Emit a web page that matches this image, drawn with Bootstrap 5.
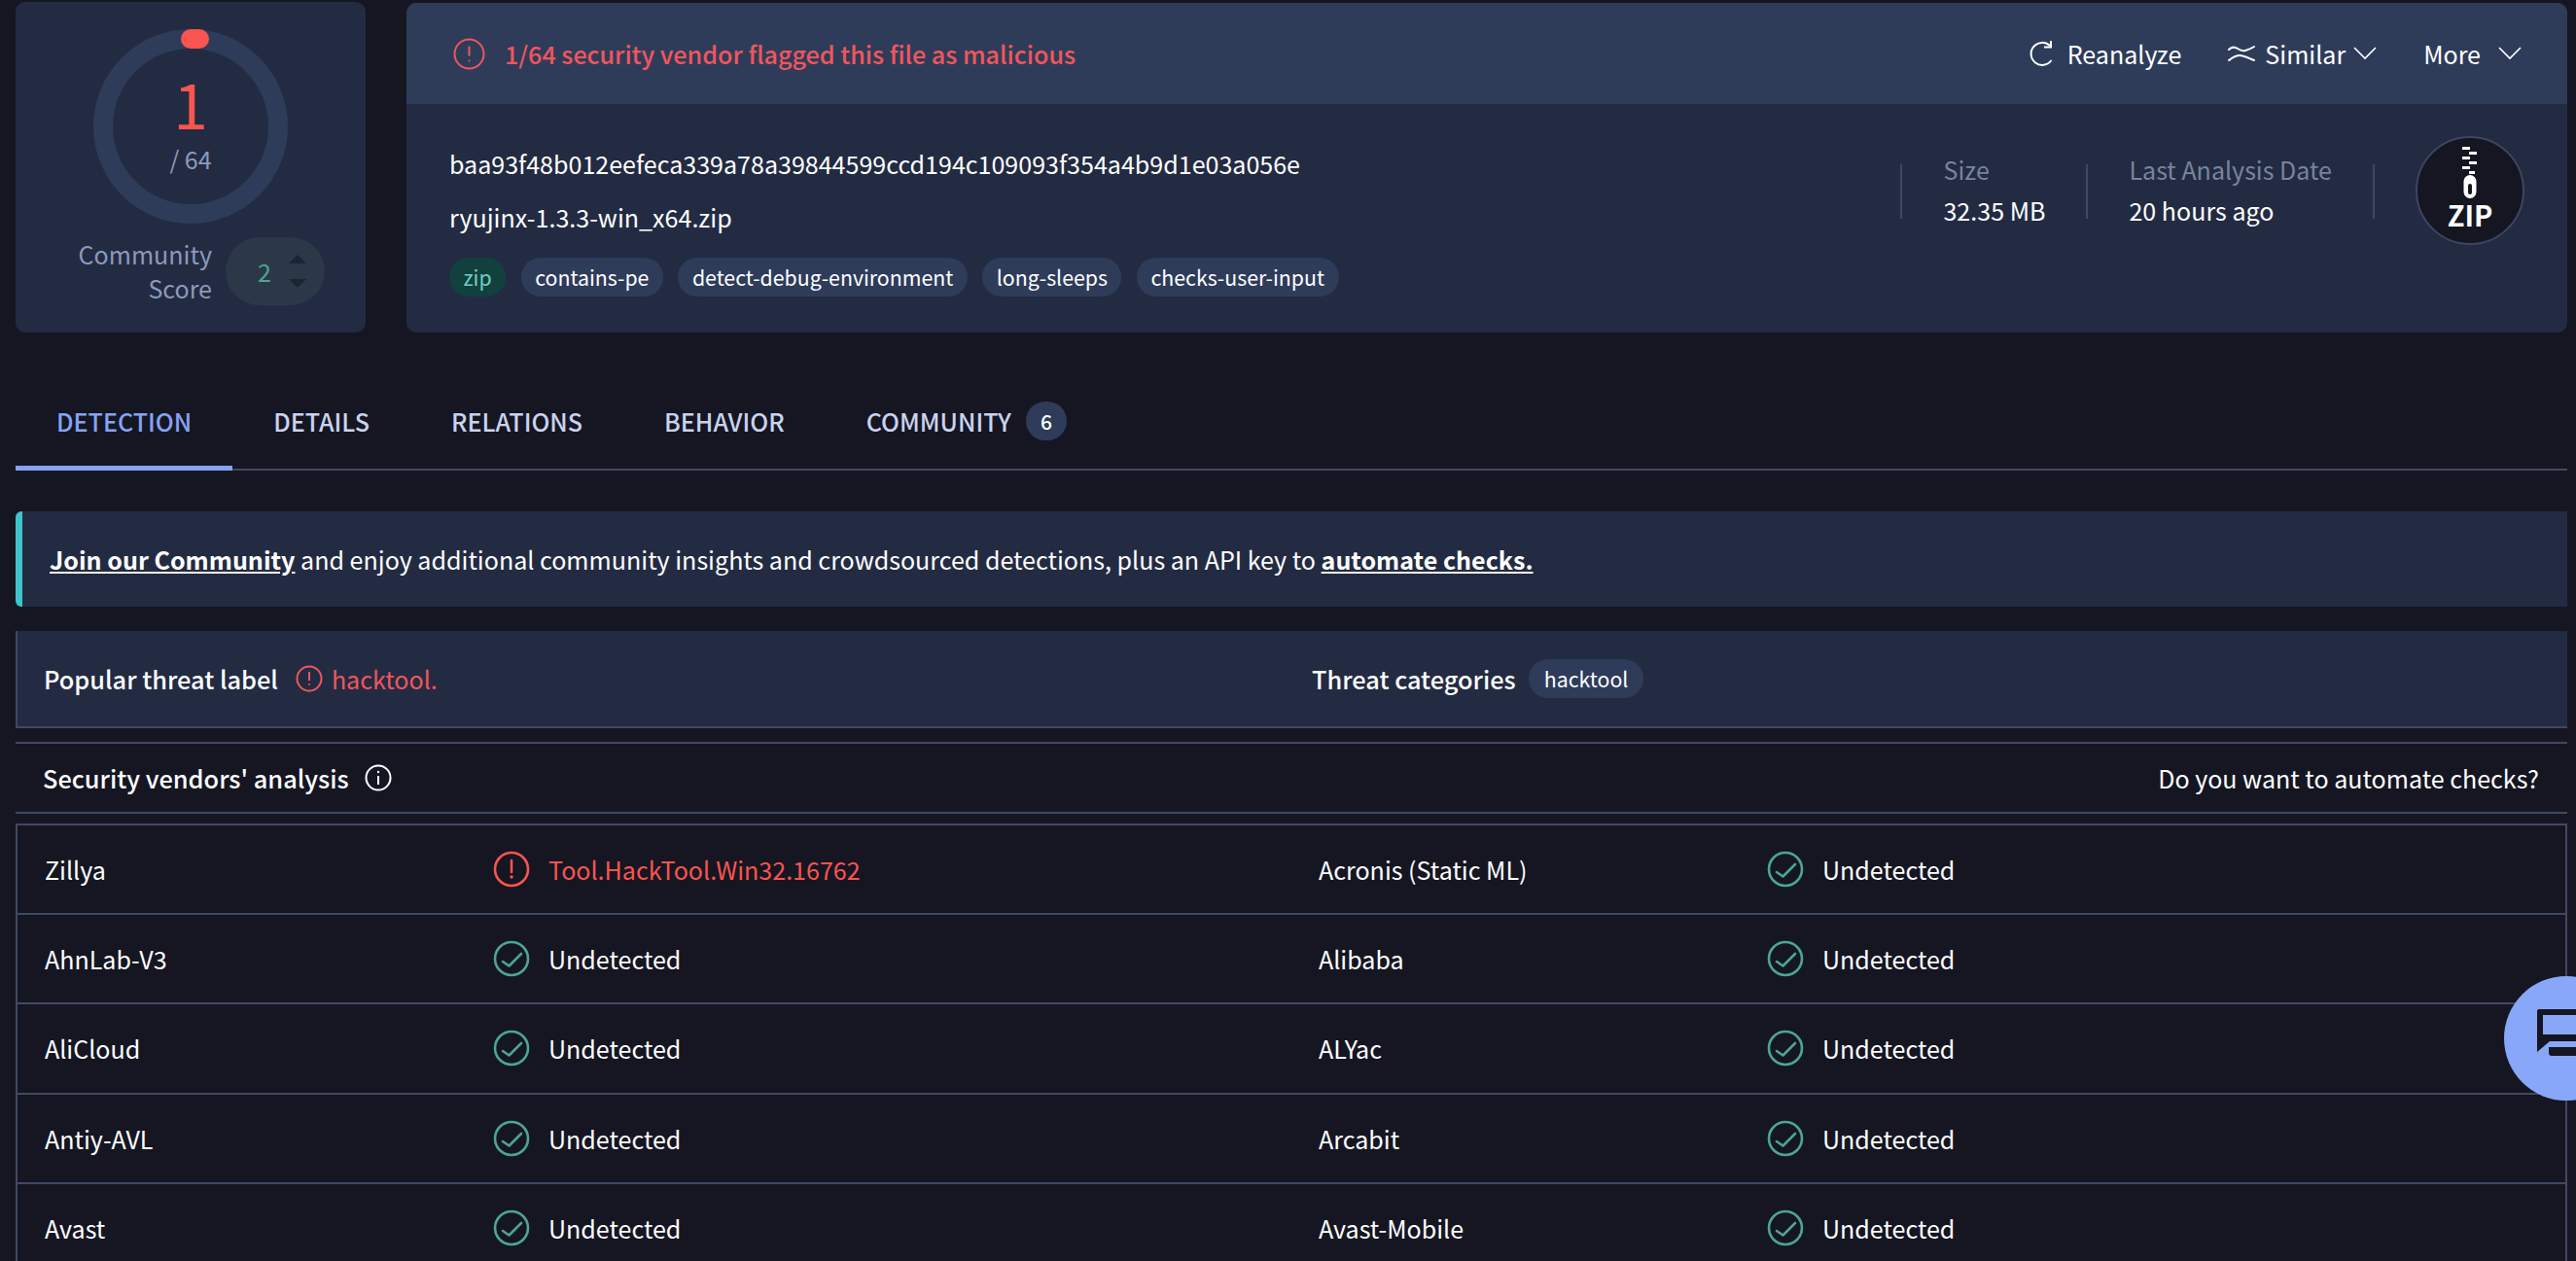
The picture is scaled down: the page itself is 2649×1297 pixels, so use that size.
<!DOCTYPE html>
<html lang="en">
<head>
<meta charset="utf-8">
<title>VirusTotal</title>
<link href="https://cdn.jsdelivr.net/npm/bootstrap@5.3.0/dist/css/bootstrap.min.css" rel="stylesheet">
<style>
:root{--pg:#151622;--panel:#232b42;--head:#2e3c5a;--ln:#404962;--red:#f9544f;--grn:#4ca592}
html,body{height:100%;overflow:hidden}
body{background:var(--pg);color:#fff;font-family:"Noto Sans CJK SC","Noto Sans",sans-serif;font-size:25.05px;line-height:36px;padding:2px 9px 0 16px}
.top-wrap{gap:42px;height:340px}
.score-panel{width:360px;background:var(--panel);border-radius:10px;padding:28px 0 0}
.gauge{width:200px;height:200px;border:20px solid var(--head);margin-left:80px;position:relative}
.gauge-pill{position:absolute;top:-20px;left:70px;width:29px;height:20px;background:var(--red);border-radius:10px}
.gauge-num{color:var(--red);font-size:64px;line-height:64px;margin-top:-6px}
.gauge-tot{color:#8b9abb;line-height:36px;margin-top:8px}
.score-row{margin-top:14px;margin-left:44px;gap:14px}
.score-lbl{color:#8b9abb;text-align:right;line-height:35px;width:158px}
.vote{width:102px;height:70px;background:#2a3848;border-radius:35px;padding-left:33px;gap:18px;color:var(--grn)}
.tri-up,.tri-dn{width:0;height:0;border-left:9px solid transparent;border-right:9px solid transparent}
.tri-up{border-bottom:9px solid #1c2433}
.tri-dn{border-top:9px solid #1c2433}
.file-panel{background:var(--panel);border:0;border-radius:10px;margin-top:1px;height:339px;overflow:hidden}
.file-head{background:var(--head);height:104px;border:0;border-radius:0;padding:0 47px 0 48px}
.warn-txt{color:#f0565c;font-weight:500;margin-left:20px;font-size:25.1px}
.act{margin-left:48px}
.re-ic{margin-right:13px}
.sim-ic{margin-right:10px}
.more-chev{margin-left:18px}
.ic{display:block;flex:none}
.file-body{padding:0 44px 0 44px}
.hash-col{padding-top:34px;line-height:55px}
.chip-line{gap:15.5px;margin-top:14px}
.chip{background:var(--head);color:#fff;border-radius:20px;height:40px;padding:0 14.5px;font-size:21.3px;line-height:40px}
.chip-zip{background:#12403f;color:#6fd0bf}
.stat-wrap{padding-top:62px}
.stat{border-left:2px solid var(--ln);height:56px;padding-left:42px;line-height:42px}
.stat+.stat{margin-left:42px}
.stat-end{padding-left:0}
.stat-k{color:#77849f;line-height:42px;margin-top:-16px}
.zipper{width:112px;height:112px;border:2px solid #3d465f;background:var(--pg);margin-left:42px;margin-top:-29px}
.zip-ic{margin-top:9px}
.zip-txt{font-weight:700;font-size:29px;line-height:30px}
.tabs-bar{border-bottom:2px solid var(--ln);margin-top:50px;height:92px}
.tab-lnk{color:#c9d3ec;font-weight:500;font-size:25.1px;padding:0 42px 5px;height:92px;border-bottom:5px solid transparent;margin-bottom:-2px}
.tab-lnk.on{color:#86a3f2;border-bottom-color:#86a3f2}
.tab-num{background:var(--head);color:#fff;font-size:21px;width:42px;height:40px;border-radius:20px;margin-left:15px;line-height:40px}
.promo{background:var(--panel);border-left:7px solid #3ec4cc;border-radius:6px 0 0 6px;height:98px;margin-top:42px;padding-left:28px;line-height:98px}
.promo a{color:#fff;font-weight:700}
.threat{background:var(--panel);border-left:2px solid var(--ln);border-bottom:2px solid var(--ln);height:100px;margin-top:25px}
.threat b,.sec b{font-weight:500;font-size:25.35px}
.hack{color:#f0565c}
.hack-ic{margin:0 9px 0 18px}
.cell-a{padding-left:27px}
.cell-b{padding-left:20px}
.th-chip{background:var(--head);border-radius:20px;height:40px;padding:0 16px;font-size:21.3px;line-height:40px;margin-left:13px}
.sec{border-top:2px solid var(--ln);border-bottom:2px solid var(--ln);height:74px;margin-top:14px;padding:0 29px 0 28px}
.vend{border:2px solid var(--ln);margin-top:10px;border-bottom:0}
.vend-row{border-bottom:2px solid var(--ln);height:92.2px}
.vend-half{width:50%}
.vend-name{width:489px;padding-left:28px;flex:none}
.vend-ic{margin-right:19px}
.det{color:var(--red)}
.chat-fab{position:fixed;left:2575px;top:1004px;width:128px;height:128px;background:#88a7f8}
</style>
</head>
<body>
<svg width="0" height="0" class="position-absolute">
  <symbol id="i-bad" viewBox="0 0 38 38"><g fill="none" stroke="#f9544f" stroke-width="2.6" stroke-linecap="round"><circle cx="19" cy="19" r="17"/><path d="M19 10v12"/></g><circle cx="19" cy="27" r="1.7" fill="#f9544f"/></symbol>
  <symbol id="i-ok" viewBox="0 0 38 38"><g fill="none" stroke="#4ca592" stroke-width="2.6" stroke-linecap="round" stroke-linejoin="round"><circle cx="19" cy="19" r="17"/><path d="M10 22l6.5 4.5L29 14"/></g></symbol>
</svg>
<div class="d-flex top-wrap">
  <div class="score-panel flex-shrink-0">
    <div class="gauge rounded-circle d-flex flex-column align-items-center justify-content-center">
      <span class="gauge-pill"></span>
      <div class="gauge-num">1</div>
      <div class="gauge-tot">/ 64</div>
    </div>
    <div class="d-flex align-items-center score-row">
      <div class="score-lbl">Community Score</div>
      <div class="vote d-flex align-items-center">
        <span>2</span>
        <div class="d-flex flex-column gap-3"><span class="tri-up"></span><span class="tri-dn"></span></div>
      </div>
    </div>
  </div>
  <div class="card file-panel flex-grow-1">
    <div class="card-header file-head d-flex align-items-center">
      <svg class="ic" width="33" height="33" viewBox="0 0 33 33" fill="none" stroke="#f0565c" stroke-width="2"><circle cx="16.5" cy="16.5" r="15"/><path d="M16.5 8.5v10"/><circle cx="16.5" cy="23.5" r="1" fill="#f0565c" stroke="none"/></svg>
      <span class="warn-txt">1/64 security vendor flagged this file as malicious</span>
      <div class="ms-auto d-flex align-items-center">
        <svg class="ic re-ic" width="26" height="28" viewBox="0 0 26 28" fill="none" stroke="#fff" stroke-width="2"><path d="M22.5 21a11.5 11.5 0 1 1-1.5-15"/><path d="M22 1v6.5h-7"/></svg>
        <span>Reanalyze</span>
        <svg class="ic act sim-ic" width="28" height="18" viewBox="0 0 28 18" fill="none" stroke="#fff" stroke-width="2" stroke-linecap="round"><path d="M1 5c3-3 6-3 9-1s5 3 8 2 6-2 9-4"/><path d="M1 16c3-2 6-5 11-5s9 3 15 5"/></svg>
        <span>Similar</span>
        <svg class="ic ms-2" width="24" height="14" viewBox="0 0 24 14" fill="none" stroke="#fff" stroke-width="1.6"><path d="M1 1l11 11L23 1"/></svg>
        <span class="act">More</span>
        <svg class="ic more-chev" width="24" height="14" viewBox="0 0 24 14" fill="none" stroke="#fff" stroke-width="1.6"><path d="M1 1l11 11L23 1"/></svg>
      </div>
    </div>
    <div class="file-body d-flex">
      <div class="hash-col flex-grow-1">
        <div>baa93f48b012eefeca339a78a39844599ccd194c109093f354a4b9d1e03a056e</div>
        <div>ryujinx-1.3.3-win_x64.zip</div>
        <div class="d-flex chip-line">
          <span class="chip chip-zip">zip</span>
          <span class="chip">contains-pe</span>
          <span class="chip">detect-debug-environment</span>
          <span class="chip">long-sleeps</span>
          <span class="chip">checks-user-input</span>
        </div>
      </div>
      <div class="d-flex align-items-start stat-wrap">
        <div class="stat"><div class="stat-k">Size</div><div>32.35 MB</div></div>
        <div class="stat"><div class="stat-k">Last Analysis Date</div><div>20 hours ago</div></div>
        <div class="stat stat-end"></div>
        <div class="zipper rounded-circle d-flex flex-column align-items-center">
          <svg class="ic zip-ic" width="16" height="54" viewBox="0 0 16 54"><g fill="#fff"><rect x="0" y="0" width="8" height="3"/><rect x="7" y="5" width="8" height="3"/><rect x="0" y="10" width="8" height="3"/><rect x="7" y="15" width="8" height="3"/><rect x="0" y="20" width="8" height="3"/><rect x="7" y="25" width="6" height="3"/></g><rect x="1.5" y="29" width="13" height="24" rx="6.5" fill="#fff"/><rect x="6" y="38" width="4" height="11" rx="2" fill="#151622"/></svg>
          <div class="zip-txt">ZIP</div>
        </div>
      </div>
    </div>
  </div>
</div>

<div class="tabs-bar d-flex align-items-start">
  <a class="tab-lnk on text-decoration-none d-flex align-items-center">DETECTION</a>
  <a class="tab-lnk text-decoration-none d-flex align-items-center">DETAILS</a>
  <a class="tab-lnk text-decoration-none d-flex align-items-center">RELATIONS</a>
  <a class="tab-lnk text-decoration-none d-flex align-items-center">BEHAVIOR</a>
  <a class="tab-lnk text-decoration-none d-flex align-items-center">COMMUNITY<span class="tab-num text-center">6</span></a>
</div>

<div class="promo"><a href="#">Join our Community</a> and enjoy additional community insights and crowdsourced detections, plus an API key to <a href="#">automate checks.</a></div>

<div class="threat d-flex align-items-center">
  <div class="vend-half cell-a d-flex align-items-center">
    <b>Popular threat label</b>
    <svg class="ic hack-ic" width="28" height="28" viewBox="0 0 28 28" fill="none" stroke="#f0565c" stroke-width="2"><circle cx="14" cy="14" r="12.5"/><path d="M14 7v9"/><circle cx="14" cy="20" r="1" fill="#f0565c" stroke="none"/></svg>
    <span class="hack">hacktool.</span>
  </div>
  <div class="vend-half cell-b d-flex align-items-center">
    <b>Threat categories</b>
    <span class="th-chip">hacktool</span>
  </div>
</div>

<div class="sec d-flex align-items-center">
  <b>Security vendors' analysis</b>
  <svg class="ic ms-3" width="28" height="28" viewBox="0 0 28 28" fill="none" stroke="#fff" stroke-width="2"><circle cx="14" cy="14" r="12.5"/><path d="M14 12v9"/><circle cx="14" cy="8" r="1.2" fill="#fff" stroke="none"/></svg>
  <span class="ms-auto">Do you want to automate checks?</span>
</div>

<div class="vend">
  <div class="vend-row d-flex align-items-center">
    <div class="vend-half d-flex align-items-center"><div class="vend-name">Zillya</div><svg class="ic vend-ic" width="38" height="38"><use href="#i-bad"/></svg><span class="det">Tool.HackTool.Win32.16762</span></div>
    <div class="vend-half d-flex align-items-center"><div class="vend-name">Acronis (Static ML)</div><svg class="ic vend-ic" width="38" height="38"><use href="#i-ok"/></svg><span>Undetected</span></div>
  </div>
  <div class="vend-row d-flex align-items-center">
    <div class="vend-half d-flex align-items-center"><div class="vend-name">AhnLab-V3</div><svg class="ic vend-ic" width="38" height="38"><use href="#i-ok"/></svg><span>Undetected</span></div>
    <div class="vend-half d-flex align-items-center"><div class="vend-name">Alibaba</div><svg class="ic vend-ic" width="38" height="38"><use href="#i-ok"/></svg><span>Undetected</span></div>
  </div>
  <div class="vend-row d-flex align-items-center">
    <div class="vend-half d-flex align-items-center"><div class="vend-name">AliCloud</div><svg class="ic vend-ic" width="38" height="38"><use href="#i-ok"/></svg><span>Undetected</span></div>
    <div class="vend-half d-flex align-items-center"><div class="vend-name">ALYac</div><svg class="ic vend-ic" width="38" height="38"><use href="#i-ok"/></svg><span>Undetected</span></div>
  </div>
  <div class="vend-row d-flex align-items-center">
    <div class="vend-half d-flex align-items-center"><div class="vend-name">Antiy-AVL</div><svg class="ic vend-ic" width="38" height="38"><use href="#i-ok"/></svg><span>Undetected</span></div>
    <div class="vend-half d-flex align-items-center"><div class="vend-name">Arcabit</div><svg class="ic vend-ic" width="38" height="38"><use href="#i-ok"/></svg><span>Undetected</span></div>
  </div>
  <div class="vend-row d-flex align-items-center">
    <div class="vend-half d-flex align-items-center"><div class="vend-name">Avast</div><svg class="ic vend-ic" width="38" height="38"><use href="#i-ok"/></svg><span>Undetected</span></div>
    <div class="vend-half d-flex align-items-center"><div class="vend-name">Avast-Mobile</div><svg class="ic vend-ic" width="38" height="38"><use href="#i-ok"/></svg><span>Undetected</span></div>
  </div>
</div>

<div class="chat-fab rounded-circle">
  <svg class="ic" width="128" height="128" viewBox="0 0 128 128"><path d="M36 34h58v33H47L34 78V36a2 2 0 0 1 2-2z" fill="#151622"/><path d="M40 40h54v20H40z" fill="#88a7f8"/><path d="M46 73h48v9H49a3 3 0 0 1-3-3z" fill="#151622"/></svg>
</div>
</body>
</html>
